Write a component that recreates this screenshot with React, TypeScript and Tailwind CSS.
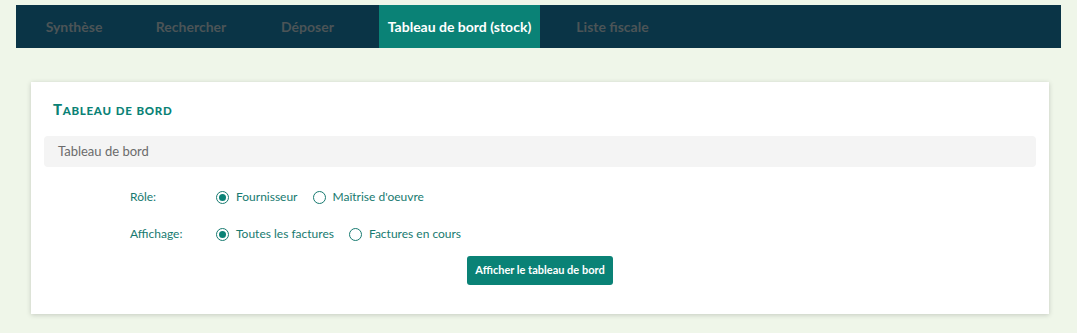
import { useState } from "react";

const tabs = [
	{ label: "Synthèse", cls: "ml-[21px] w-[74px]" },
	{ label: "Rechercher", cls: "ml-[37px] w-[86px]" },
	{ label: "Déposer", cls: "ml-[39px] w-[69px]" },
	{ label: "Tableau de bord (stock)", cls: "ml-[37px] w-[161px]", active: true },
	{ label: "Liste fiscale", cls: "ml-[28px] w-[89px]" },
];

function Radio({
	checked,
	label,
	onClick,
}: {
	checked: boolean;
	label: string;
	onClick: () => void;
}) {
	return (
		<button
			type="button"
			onClick={onClick}
			className="flex items-center gap-[7px] text-[12px] text-[#177a70]"
		>
			<span className="flex h-[13px] w-[13px] items-center justify-center rounded-full border border-[#177a70] bg-white">
				{checked && <span className="h-[7px] w-[7px] rounded-full bg-[#0a8276]" />}
			</span>
			{label}
		</button>
	);
}

export default function App() {
	const [role, setRole] = useState("fournisseur");
	const [view, setView] = useState("toutes");

	return (
		<div className="min-h-[333px] bg-[#eff6e9] pt-[5px] font-['Lato',sans-serif]">
			{/* Top navigation */}
			<nav className="mx-[16px] flex h-[43px] bg-[#0a3446]">
				{tabs.map((t) => (
					<div
						key={t.label}
						className={`${t.cls} flex items-center justify-center whitespace-nowrap text-[14px] font-bold ${
							t.active ? "bg-[#0a8276] text-white" : "text-[#4c5457]"
						}`}
					>
						{t.label}
					</div>
				))}
			</nav>

			{/* Dashboard card */}
			<section className="mt-[34px] ml-[31px] w-[1018px] bg-white px-[13px] pt-[19px] pb-[29px] shadow-[0_1px_5px_rgba(0,0,0,0.18)]">
				<h2 className="flex items-baseline pl-[9px] font-black uppercase leading-[16px] tracking-[0.7px] text-[#0a8276]">
					<span className="text-[15px]">T</span>
					<span className="text-[11.5px]">ableau</span>
					<span className="ml-[4px] text-[11.5px]">de</span>
					<span className="ml-[4px] text-[11.5px]">bord</span>
				</h2>
				<div className="mt-[17px] flex h-[31px] items-center rounded-[4px] bg-[#f4f4f4] pl-[14px] text-[13px] text-[#6b6b6b]">
					Tableau de bord
				</div>

				<div className="mt-[21px] pl-[86px]">
					<div className="flex items-center">
						<div className="w-[86px] text-[12px] text-[#177a70]">Rôle:</div>
						<div className="flex items-center gap-[15px]">
							<Radio
								checked={role === "fournisseur"}
								label="Fournisseur"
								onClick={() => setRole("fournisseur")}
							/>
							<Radio
								checked={role === "moe"}
								label="Maîtrise d'oeuvre"
								onClick={() => setRole("moe")}
							/>
						</div>
					</div>
					<div className="mt-[19px] flex items-center">
						<div className="w-[86px] text-[12px] text-[#177a70]">Affichage:</div>
						<div className="flex items-center gap-[15px]">
							<Radio
								checked={view === "toutes"}
								label="Toutes les factures"
								onClick={() => setView("toutes")}
							/>
							<Radio
								checked={view === "encours"}
								label="Factures en cours"
								onClick={() => setView("encours")}
							/>
						</div>
					</div>
				</div>

				<div className="mt-[13px] flex justify-center">
					<button
						type="button"
						className="h-[29px] w-[146px] rounded-[3px] bg-[#0a8276] text-[11px] font-bold text-white"
					>
						Afficher le tableau de bord
					</button>
				</div>
			</section>
		</div>
	);
}
